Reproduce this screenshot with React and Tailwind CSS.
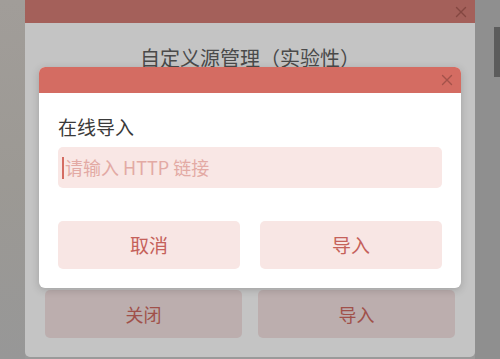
import React from "react";

const font = { fontFamily: '"Noto Sans CJK SC", "Noto Sans", sans-serif' };

const CloseIcon = ({ className }) => (
  <svg viewBox="0 0 12 12" className={className} fill="none" stroke="currentColor" strokeWidth="1.4" strokeLinecap="round">
    <path d="M1.5 1.5l9 9M10.5 1.5l-9 9" />
  </svg>
);

export default function App() {
  return (
    <div className="relative w-[500px] h-[359px] overflow-hidden bg-[#9a9a9a] flex" style={font}>
      {/* left edge of the page behind */}
      <div className="w-[25px] h-full bg-gradient-to-b from-[#a19d99] via-[#9c9994] to-[#979797]" />

      {/* back dialog, dimmed */}
      <div className="w-[450px] h-[357px] flex flex-col bg-[#c4c4c4] rounded-b-[5px]">
        <div className="h-[23px] bg-[#a4605a] flex justify-end items-center pr-[8px]">
          <CloseIcon className="w-[12px] h-[12px] text-[#844741]" />
        </div>
        <div className="flex-1 flex flex-col px-[20px] pb-[19px]">
          <p className="mt-[21px] text-center text-[20px] leading-[28px] text-[#4a4a4a]">自定义源管理（实验性）</p>
          <div className="flex-1" />
          <div className="flex gap-[16px]">
            <button className="flex-1 h-[48px] rounded-[5px] bg-[#bcaeae] text-[18px] text-[#a0514a]">关闭</button>
            <button className="flex-1 h-[48px] rounded-[5px] bg-[#bcaeae] text-[18px] text-[#a0514a]">导入</button>
          </div>
        </div>
      </div>

      {/* right edge of the page behind */}
      <div className="flex-1 h-full bg-[#8f8f8f] flex justify-end pt-[27px]">
        <div className="w-[6px] h-[50px] bg-[#5c5c5c]" />
      </div>

      {/* front dialog */}
      <div className="absolute left-[39px] top-[67px] w-[422px] h-[221px] bg-white rounded-[6px] overflow-hidden shadow-[0_2px_8px_rgba(0,0,0,0.18)] flex flex-col">
        <div className="h-[26px] bg-[#d46c62] flex justify-end items-center pr-[8px]">
          <CloseIcon className="w-[12px] h-[12px] text-[#a4524a]" />
        </div>
        <div className="flex-1 flex flex-col px-[19px] pb-[19px]">
          <p className="mt-[21px] text-[19px] leading-[26px] text-[#3a3a3a]">在线导入</p>
          <div className="mt-[7px] h-[41px] rounded-[5px] bg-[#f9e7e5] flex items-center pl-[4px]">
            <span className="w-[2px] h-[22px] bg-[#d46c62]" />
            <span className="ml-[1px] text-[18px] text-[#e3aaa4]">请输入 HTTP 链接</span>
          </div>
          <div className="flex-1" />
          <div className="flex gap-[20px]">
            <button className="flex-1 h-[48px] rounded-[5px] bg-[#f8e6e4] text-[19px] text-[#c5615a]">取消</button>
            <button className="flex-1 h-[48px] rounded-[5px] bg-[#f8e6e4] text-[19px] text-[#c5615a]">导入</button>
          </div>
        </div>
      </div>
    </div>
  );
}
